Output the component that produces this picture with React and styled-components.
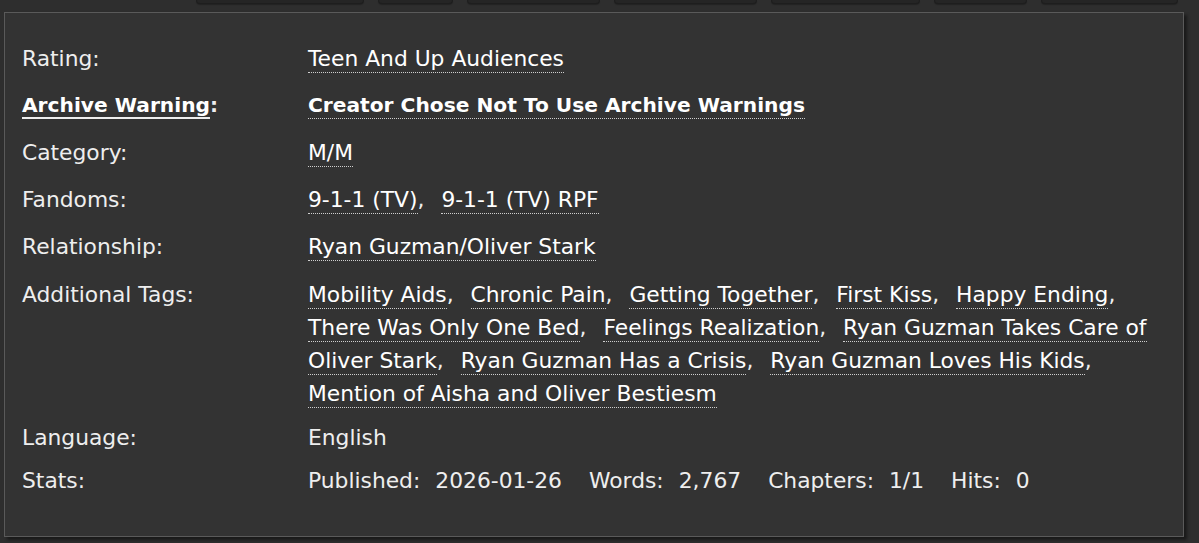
import React from "react";
import styled, { createGlobalStyle } from "styled-components";

const Global = createGlobalStyle`
  html, body { margin: 0; padding: 0; background: #2e2e2e; }
  body { font-family: "DejaVu Sans", "Liberation Sans", sans-serif; color: #eeeeee; }
`;

const Page = styled.div`
  width: 1199px;
  height: 543px;
  overflow: hidden;
  background: #2e2e2e;
`;

const TabBar = styled.div`
  display: flex;
  gap: 14px;
  padding-left: 196px;
  height: 4px;
  margin-bottom: 8px;
`;

const Tab = styled.div`
  width: ${(p) => p.$w}px;
  height: 4px;
  background: #252525;
  border: 1px solid #1e1e1e;
  border-top: none;
  border-radius: 0 0 5px 5px;
  box-sizing: border-box;
  box-shadow: 0 1px 1px rgba(0, 0, 0, 0.25);
`;

const Panel = styled.dl`
  margin: 0 0 0 4px;
  width: 1180px;
  box-sizing: border-box;
  height: 525px;
  background: #333333;
  border: 1px solid #5a5a5a;
  box-shadow: 3px 3px 3px rgba(0, 0, 0, 0.45);
  padding: 29px 28px 0 17px;
  display: grid;
  grid-template-columns: 286px 1fr;
  align-content: start;
  font-size: 21.8px;
  line-height: 33px;
`;

const Label = styled.dt`
  margin: 0 0 ${(p) => p.$gap}px 0;
  font-weight: ${(p) => (p.$bold ? 700 : 400)};
  font-size: ${(p) => (p.$bold ? "20.2px" : "inherit")};
  color: #eeeeee;
`;

const Value = styled.dd`
  margin: 0 0 ${(p) => p.$gap}px 0;
  font-weight: ${(p) => (p.$bold ? 700 : 400)};
  font-size: ${(p) => (p.$bold ? "20.2px" : "inherit")};
  color: #eeeeee;
`;

const LabelLink = styled.a`
  color: #ffffff;
  text-decoration: none;
  border-bottom: 2px solid #eeeeee;
`;

const TagList = styled.ul`
  list-style: none;
  margin: 0;
  padding: 0;
  display: inline;
`;

const TagItem = styled.li`
  display: inline;
  margin-right: ${(p) => (p.$last ? 0 : 10)}px;
  &:after {
    content: "${(p) => (p.$last ? "" : ",")}";
  }
`;

const Tag = styled.a`
  color: #ffffff;
  text-decoration: none;
  border-bottom: 1px dotted #cfcfcf;
  padding-bottom: 1px;
`;

const Stats = styled.dl`
  margin: 0;
  display: flex;
  gap: 27px;
`;

const StatPair = styled.div`
  display: flex;
  gap: 15px;
`;

const StatTerm = styled.dt`
  margin: 0;
`;

const StatValue = styled.dd`
  margin: 0;
`;

const tabs = [168, 75, 133, 143, 149, 93, 137];

const Tags = ({ items }) => (
  <TagList>
    {items.map((t, i) => (
      <React.Fragment key={t}>
        <TagItem $last={i === items.length - 1}>
          <Tag href="#">{t}</Tag>
        </TagItem>
        {i < items.length - 1 ? " " : null}
      </React.Fragment>
    ))}
  </TagList>
);

const additional = [
  "Mobility Aids",
  "Chronic Pain",
  "Getting Together",
  "First Kiss",
  "Happy Ending",
  "There Was Only One Bed",
  "Feelings Realization",
  "Ryan Guzman Takes Care of Oliver Stark",
  "Ryan Guzman Has a Crisis",
  "Ryan Guzman Loves His Kids",
  "Mention of Aisha and Oliver Bestiesm",
];

const stats = [
  ["Published:", "2026-01-26"],
  ["Words:", "2,767"],
  ["Chapters:", "1/1"],
  ["Hits:", "0"],
];

export default function App() {
  return (
    <Page>
      <Global />
      <TabBar>
        {tabs.map((w, i) => (
          <Tab key={i} $w={w} />
        ))}
      </TabBar>
      <Panel>
        <Label $gap={14}>Rating:</Label>
        <Value $gap={14}>
          <Tags items={["Teen And Up Audiences"]} />
        </Value>

        <Label $gap={14} $bold>
          <LabelLink href="#">Archive Warning</LabelLink>:
        </Label>
        <Value $gap={14} $bold>
          <Tags items={["Creator Chose Not To Use Archive Warnings"]} />
        </Value>

        <Label $gap={14}>Category:</Label>
        <Value $gap={14}>
          <Tags items={["M/M"]} />
        </Value>

        <Label $gap={14}>Fandoms:</Label>
        <Value $gap={14}>
          <Tags items={["9-1-1 (TV)", "9-1-1 (TV) RPF"]} />
        </Value>

        <Label $gap={15}>Relationship:</Label>
        <Value $gap={15}>
          <Tags items={["Ryan Guzman/Oliver Stark"]} />
        </Value>

        <Label $gap={11}>Additional Tags:</Label>
        <Value $gap={11}>
          <Tags items={additional} />
        </Value>

        <Label $gap={10}>Language:</Label>
        <Value $gap={10}>English</Value>

        <Label $gap={0}>Stats:</Label>
        <Value $gap={0}>
          <Stats>
            {stats.map(([k, v]) => (
              <StatPair key={k}>
                <StatTerm>{k}</StatTerm>
                <StatValue>{v}</StatValue>
              </StatPair>
            ))}
          </Stats>
        </Value>
      </Panel>
    </Page>
  );
}
